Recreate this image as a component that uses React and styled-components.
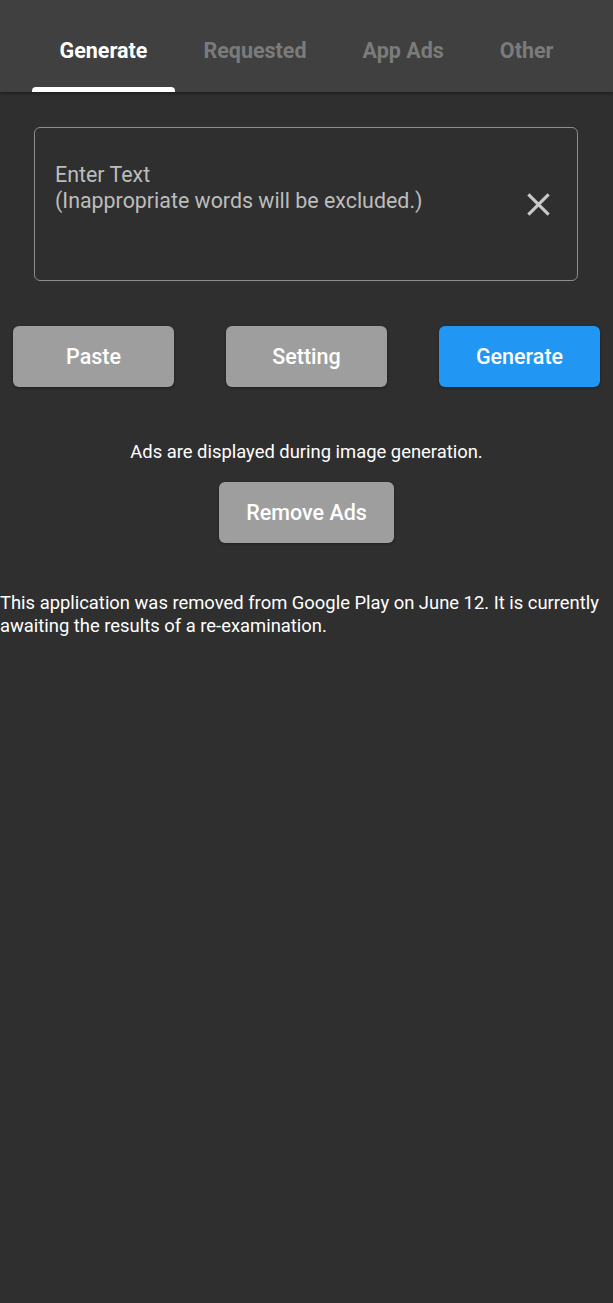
import React from "react";
import styled, { createGlobalStyle } from "styled-components";

const Global = createGlobalStyle`
  html, body { margin: 0; padding: 0; background: #2f2f2f; }
  body { font-family: Roboto, "Noto Sans", sans-serif; }
  * { box-sizing: border-box; }
`;

const Page = styled.div`
  min-height: 1303px;
  background: #2f2f2f;
  color: #fff;
`;

const TabBar = styled.div`
  height: 92px;
  background: #404040;
  display: flex;
  justify-content: center;
  align-items: stretch;
  box-shadow: 0 1px 3px rgba(0,0,0,0.5);
  position: relative;
  z-index: 1;
`;

const Tab = styled.div`
  position: relative;
  padding: 8px 28px 0;
  display: flex;
  align-items: center;
  justify-content: center;
  font-size: 21.5px;
  font-weight: 700;
  color: ${p => (p.$active ? "#ffffff" : "#7b7b7b")};
  &::after {
    content: "";
    display: ${p => (p.$active ? "block" : "none")};
    position: absolute;
    left: 0;
    right: 0;
    bottom: 0;
    height: 5px;
    background: #fff;
    border-radius: 4px 4px 0 0;
  }
`;

const Content = styled.div`
  display: flex;
  flex-direction: column;
`;

const InputBox = styled.div`
  margin: 35px 35px 0 34px;
  height: 154px;
  border: 1.5px solid #8c8c8c;
  border-radius: 6px;
  display: flex;
  align-items: flex-start;
  padding: 34px 25px 0 20px;
`;

const Placeholder = styled.div`
  flex: 1;
  font-size: 21.4px;
  line-height: 26px;
  color: #bdbdbd;
`;

const ClearIcon = styled.svg`
  margin-top: 29px;
  width: 27px;
  height: 27px;
`;

const ButtonRow = styled.div`
  margin-top: 45px;
  padding: 0 13px;
  display: flex;
  justify-content: space-between;
`;

const Button = styled.div`
  width: ${p => p.$w || 161}px;
  height: 61px;
  border-radius: 6px;
  background: ${p => (p.$primary ? "#2196f3" : "#9e9e9e")};
  color: #fff;
  font-size: 21.5px;
  font-weight: 500;
  display: flex;
  align-items: center;
  justify-content: center;
  box-shadow: 0 1px 3px rgba(0,0,0,0.35);
`;

const AdsNote = styled.div`
  margin-top: 54px;
  text-align: center;
  font-size: 18.4px;
  line-height: 22px;
  color: #fff;
`;

const Center = styled.div`
  display: flex;
  justify-content: center;
  margin-top: 19px;
`;

const Notice = styled.p`
  margin: 49px 0 0;
  font-size: 18.4px;
  line-height: 22.5px;
  color: #fff;
`;

export default function App() {
  return (
    <Page>
      <Global />
      <TabBar>
        <Tab $active>Generate</Tab>
        <Tab>Requested</Tab>
        <Tab>App Ads</Tab>
        <Tab>Other</Tab>
      </TabBar>
      <Content>
        <InputBox>
          <Placeholder>
            Enter Text
            <br />
            (Inappropriate words will be excluded.)
          </Placeholder>
          <ClearIcon viewBox="0 0 24 24">
            <path d="M3 3 L21 21 M21 3 L3 21" stroke="#c9c9c9" strokeWidth="2.8" strokeLinecap="butt" fill="none" />
          </ClearIcon>
        </InputBox>
        <ButtonRow>
          <Button>Paste</Button>
          <Button>Setting</Button>
          <Button $primary>Generate</Button>
        </ButtonRow>
        <AdsNote>Ads are displayed during image generation.</AdsNote>
        <Center>
          <Button $w={175}>Remove Ads</Button>
        </Center>
        <Notice>
          This application was removed from Google Play on June 12. It is currently awaiting the results of a re-examination.
        </Notice>
      </Content>
    </Page>
  );
}
